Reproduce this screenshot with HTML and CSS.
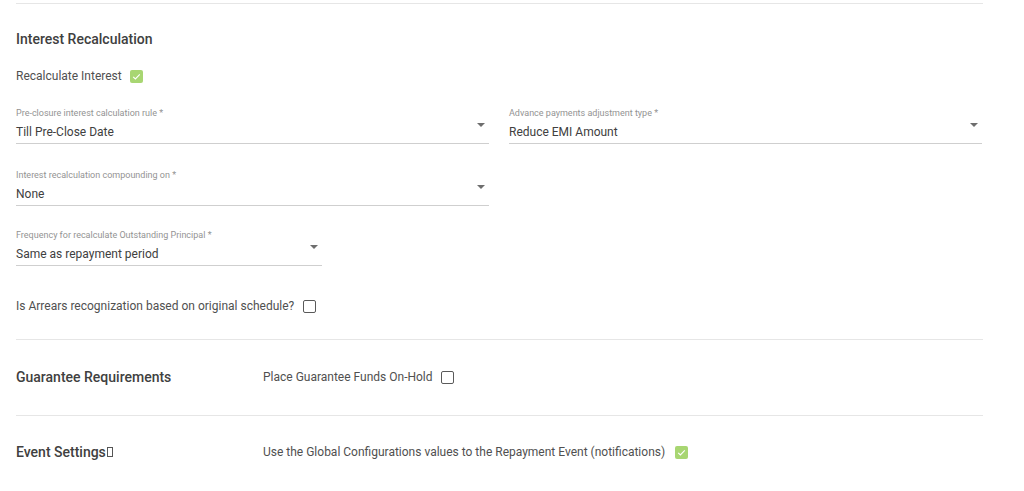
FILE: index.html
```html
<!DOCTYPE html>
<html>
<head>
<meta charset="utf-8">
<link rel="stylesheet" href="styles.css">
</head>
<body>
<div class="page">
  <hr class="divider top">
  <h3 class="section-title">Interest Recalculation</h3>
  <div class="check-row first-check">
    <span>Recalculate Interest</span>
    <span class="cb checked"><svg viewBox="0 0 13 13"><path d="M3.2 6.8 L5.4 9 L9.8 4.4" fill="none" stroke="#fff" stroke-width="1.1"/></svg></span>
  </div>

  <div class="field-grid g1">
    <div class="field">
      <div class="f-label">Pre-closure interest calculation rule *</div>
      <div class="f-value"><span class="v">Till Pre-Close Date</span><span class="arrow"></span></div>
    </div>
    <div class="field">
      <div class="f-label">Advance payments adjustment type *</div>
      <div class="f-value"><span class="v">Reduce EMI Amount</span><span class="arrow"></span></div>
    </div>
  </div>

  <div class="field-grid g2">
    <div class="field">
      <div class="f-label">Interest recalculation compounding on *</div>
      <div class="f-value"><span class="v">None</span><span class="arrow"></span></div>
    </div>
  </div>

  <div class="field narrow g3">
    <div class="f-label">Frequency for recalculate Outstanding Principal *</div>
    <div class="f-value"><span class="v">Same as repayment period</span><span class="arrow"></span></div>
  </div>

  <div class="check-row arrears">
    <span>Is Arrears recognization based on original schedule?</span>
    <span class="cb"></span>
  </div>

  <hr class="divider d2">

  <div class="setting-row r1">
    <div class="setting-title">Guarantee Requirements</div>
    <div class="check-row">
      <span>Place Guarantee Funds On-Hold</span>
      <span class="cb"></span>
    </div>
  </div>

  <hr class="divider d3">

  <div class="setting-row r2">
    <div class="setting-title">Event Settings<span class="tofu"></span></div>
    <div class="check-row">
      <span>Use the Global Configurations values to the Repayment Event (notifications)</span>
      <span class="cb checked"><svg viewBox="0 0 13 13"><path d="M3.2 6.8 L5.4 9 L9.8 4.4" fill="none" stroke="#fff" stroke-width="1.1"/></svg></span>
    </div>
  </div>
</div>
</body>
</html>
```

FILE: styles.css
```css
* { box-sizing: border-box; }
html, body { margin: 0; padding: 0; background: #fff; }
body {
  font-family: Roboto, "Liberation Sans", Arial, sans-serif;
  color: #505050;
  font-size: 12px;
}
.page {
  width: 983px;
  padding-left: 16px;
}
.divider {
  border: 0;
  border-top: 1px solid #e6e6e6;
  margin: 0;
  height: 0;
}
.divider.top { margin-top: 3px; }
.section-title {
  margin: 27px 0 0;
  font-size: 14px;
  font-weight: 500;
  line-height: 16px;
  color: #404040;
}
.check-row {
  display: flex;
  align-items: center;
  gap: 8px;
  line-height: 16px;
  font-size: 12px;
  color: #505050;
}
.first-check { margin-top: 21px; }
.cb {
  width: 13px;
  height: 13px;
  border: 1.5px solid #5a5a5a;
  border-radius: 2px;
  display: inline-block;
  flex: none;
}
.cb.checked {
  border: 0;
  background: #a8d672;
}
.cb svg { display: block; width: 13px; height: 13px; }

.field-grid {
  display: grid;
  grid-template-columns: 473px 473px;
  column-gap: 20px;
}
.g1 { margin-top: 23px; }
.g2 { margin-top: 25px; }
.g3 { margin-top: 23px; }
.field {
  border-bottom: 1px solid #cfcfcf;
  padding-bottom: 2px;
}
.field.narrow { width: 306px; }
.f-label {
  font-size: 9px;
  line-height: 12px;
  color: #939393;
}
.f-value {
  display: flex;
  align-items: center;
  margin-top: 4px;
  line-height: 16px;
  font-size: 12px;
  color: #404040;
}
.f-value .v { flex: 1; }
.arrow {
  width: 0;
  height: 0;
  border-left: 4px solid transparent;
  border-right: 4px solid transparent;
  border-top: 4px solid #6e6e6e;
  margin-right: 4px;
  margin-bottom: 14px;
}
.arrears { margin-top: 32px; }
.arrears .cb { margin-left: 1px; }
.d2 { margin-top: 25px; }
.setting-row {
  display: flex;
  align-items: center;
  line-height: 16px;
}
.r1 { margin-top: 29px; }
.d3 { margin-top: 30px; }
.r2 { margin-top: 28px; }
.setting-title {
  width: 247px;
  font-size: 14px;
  font-weight: 500;
  color: #404040;
  display: flex;
  align-items: center;
}
.r2 .cb { margin-left: 2px; }
.tofu {
  display: inline-block;
  width: 6px;
  height: 10px;
  border: 1px solid #555;
  margin-left: 1px;
}
```
